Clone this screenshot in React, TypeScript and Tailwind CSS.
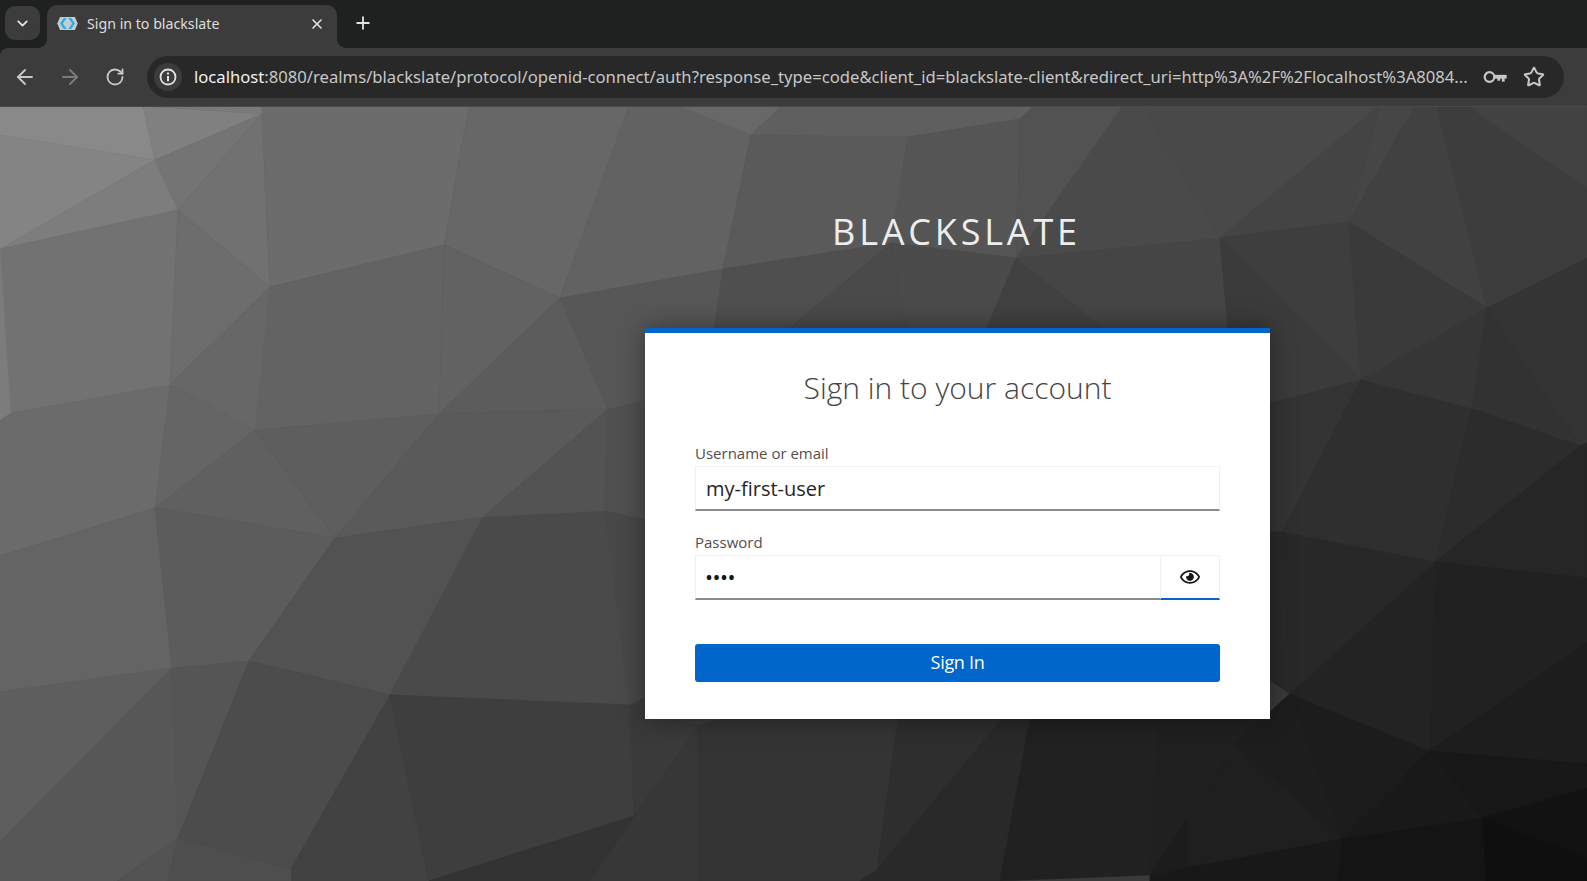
import { ArrowLeft, ArrowRight, ChevronDown, Plus, RotateCw, Star, X } from 'lucide-react'
import { FaRegEye } from 'react-icons/fa'

const url =
  'realms/blackslate/protocol/openid-connect/auth?response_type=code&client_id=blackslate-client&redirect_uri=http%3A%2F%2Flocalhost%3A8084...'

// polygon faces of the login background, in page coordinates
const faces: [string, string][] = [
  ['#898989', '0,106 143,106 155,160 0,135'],
  ['#808080', '143,106 262,114 155,160'],
  ['#7a7a7a', '143,106 262,106 262,114'],
  ['#848484', '0,135 155,160 0,249'],
  ['#7d7d7d', '155,160 178,210 0,249'],
  ['#747474', '155,160 262,114 178,210'],
  ['#717171', '178,210 262,114 270,287'],
  ['#6c6c6c', '262,114 262,106 469,106 444,245 270,287'],
  ['#676767', '469,106 629,106 560,298 444,245'],
  ['#727272', '0,249 178,210 170,385 11,413'],
  ['#7c7c7c', '0,249 11,413 0,421'],
  ['#6d6d6d', '178,210 270,287 170,385'],
  ['#636363', '270,287 444,245 439,414 255,430'],
  ['#676767', '170,385 270,287 255,430'],
  ['#626262', '444,245 560,298 439,414'],
  ['#5c5c5c', '560,298 608,409 439,414'],
  ['#6b6b6b', '11,413 170,385 155,508 0,556 0,421'],
  ['#656565', '170,385 255,430 155,508'],
  ['#606060', '255,430 335,538 155,508'],
  ['#5e5e5e', '255,430 439,414 335,538'],
  ['#5a5a5a', '439,414 608,409 483,517 335,538'],
  ['#646464', '0,556 155,508 172,668 0,692'],
  ['#5c5c5c', '155,508 335,538 249,661 172,668'],
  ['#525252', '335,538 483,517 390,695 249,661'],
  ['#4a4a4a', '483,517 605,511 630,705 390,695'],
  ['#535353', '483,517 608,409 605,511'],
  ['#505050', '608,409 645,395 645,520 605,511'],
  ['#484848', '605,511 645,520 645,715 630,705'],
  ['#5e5e5e', '0,692 172,668 0,842'],
  ['#575757', '0,842 172,668 178,838 117,881 0,881'],
  ['#555555', '172,668 249,661 178,838'],
  ['#4c4c4c', '249,661 390,695 291,869 178,838'],
  ['#424242', '390,695 429,881 291,881 291,869'],
  ['#3e3e3e', '390,695 630,705 634,816 429,881'],
  ['#525252', '178,838 168,881 117,881'],
  ['#4e4e4e', '178,838 291,869 291,881 168,881'],
  ['#3a3a3a', '630,705 698,726 634,816'],
  ['#3c3c3c', '630,705 660,690 720,719 698,726'],
  ['#373737', '634,816 698,726 698,881 590,881'],
  ['#333333', '429,881 634,816 590,881'],
  ['#626262', '629,106 679,106 751,135 723,269 560,298'],
  ['#686868', '679,106 782,106 751,135'],
  ['#5f5f5f', '782,106 1007,106 1020,119 908,137 751,135'],
  ['#5a5a5a', '751,135 908,137 891,243 723,269'],
  ['#575757', '560,298 723,269 714,340 645,400 608,409'],
  ['#555555', '908,137 1020,119 1016,258 891,243'],
  ['#606060', '1020,119 1007,106 1033,106'],
  ['#525252', '1020,119 1033,106 1123,106 1016,258'],
  ['#4f4f4f', '723,269 891,243 790,328 714,328'],
  ['#4a4a4a', '891,243 906,328 790,328'],
  ['#4b4b4b', '891,243 1016,258 987,328 906,328'],
  ['#414141', '1016,258 1103,328 987,328'],
  ['#454545', '1016,258 1220,238 1228,328 1103,328'],
  ['#4a4a4a', '1016,258 1123,106 1143,106 1187,181 1220,238'],
  ['#494949', '1143,106 1379,106 1220,238'],
  ['#464646', '1379,106 1415,106 1349,222'],
  ['#444444', '1220,238 1379,106 1349,222'],
  ['#414141', '1415,106 1437,106 1487,308 1349,222'],
  ['#3d3d3d', '1437,106 1467,106 1587,188 1587,258 1487,308'],
  ['#424242', '1467,106 1587,106 1587,188'],
  ['#3e3e3e', '1220,238 1349,222 1361,380'],
  ['#3b3b3b', '1220,238 1361,380 1270,403 1228,328'],
  ['#3a3a3a', '1349,222 1487,308 1361,380'],
  ['#363636', '1361,380 1487,308 1472,409'],
  ['#343434', '1487,308 1587,258 1587,443 1580,446'],
  ['#323232', '1487,308 1580,446 1472,409'],
  ['#343434', '1270,403 1361,380 1282,532 1270,534'],
  ['#2f2f2f', '1361,380 1472,409 1435,562 1282,532'],
  ['#2c2c2c', '1472,409 1580,446 1435,562'],
  ['#262626', '1580,446 1587,443 1587,578 1435,562'],
  ['#2a2a2a', '1270,532 1282,532 1290,694 1270,680'],
  ['#282828', '1282,532 1435,562 1290,694'],
  ['#212121', '1435,562 1587,578 1587,643 1429,751'],
  ['#232323', '1435,562 1429,751 1290,694'],
  ['#1d1d1d', '1429,751 1587,643 1587,764'],
  ['#171717', '1429,751 1587,764 1587,788 1482,818'],
  ['#1c1c1c', '1290,694 1429,751 1342,839'],
  ['#191919', '1429,751 1482,818 1342,839'],
  ['#121212', '1482,818 1587,788 1587,858'],
  ['#0f0f0f', '1482,818 1587,858 1587,881 1485,881'],
  ['#141414', '1342,839 1482,818 1485,881 1337,881'],
  ['#1f1f1f', '1234,744 1342,839 1187,868 1187,818'],
  ['#1d1d1d', '1234,744 1290,694 1342,839'],
  ['#181818', '1187,868 1342,839 1337,881 1150,881'],
  ['#343434', '698,726 720,719 898,719 877,870 860,881 698,881'],
  ['#2e2e2e', '898,719 1002,719 877,870'],
  ['#292929', '1002,719 1030,719 1000,881 860,881 877,870'],
  ['#212121', '1030,719 1160,719 1150,875 1000,881'],
  ['#202020', '1160,719 1270,719 1234,744 1187,818 1150,875'],
  ['#1e1e1e', '1270,719 1290,694 1234,744'],
  ['#1c1c1c', '1187,818 1187,868 1150,875'],
  ['#191919', '1150,875 1187,868 1150,881'],
]

function Background() {
  return (
    <svg className="absolute inset-0 h-full w-full" viewBox="0 107 1587 774" preserveAspectRatio="none">
      <rect x="0" y="106" width="1587" height="775" fill="#3a3a3a" />
      {faces.map(([fill, points]) => (
        <polygon key={points} points={points} fill={fill} stroke={fill} strokeWidth="0.6" />
      ))}
    </svg>
  )
}

function Favicon() {
  return (
    <svg width="21" height="13" viewBox="0 0 22 14" className="shrink-0">
      <path d="M3 0h16l3 7-3 7H3L0 7z" fill="#c9cacb" />
      <path d="M7 1 3 7l4 6h3L6 7l4-6z" fill="#1fb0ea" />
      <path d="M12 1l4 6-4 6h3l4-6-4-6z" fill="#1fb0ea" />
    </svg>
  )
}

function KeyIcon() {
  return (
    <svg width="24" height="14" viewBox="0 0 24 14" fill="none" stroke="#c7c7c7" className="shrink-0">
      <circle cx="6.500" cy="7" r="4.800" strokeWidth="2.200" />
      <path d="M11 5h12.500v3.500h-2v3h-2.500v-3h-2v2h-2.500v-2H11z" fill="#c7c7c7" strokeWidth="0.300" />
    </svg>
  )
}

function Field({ label, value }: { label: string; value: string }) {
  return (
    <div>
      <div className="h-[26px] text-[15px] leading-[26px] text-[#4f4f4f]">{label}</div>
      <div className="flex h-[45px] items-center border border-b-2 border-[#f0f0f0] border-b-[#8a8d90] px-[10px] pt-[2px] text-[20px] text-[#262626]">
        {value}
      </div>
    </div>
  )
}

export default function App() {
  return (
    <div className="flex h-[881px] w-full flex-col overflow-hidden bg-[#1f2020] font-['Open_Sans',sans-serif]">
      <div className="flex h-[48px] shrink-0 items-start pl-[5px] font-['Noto_Sans',sans-serif]">
        <button className="mt-[6px] flex h-[34px] w-[35px] items-center justify-center rounded-[10px] bg-[#3c3c3c] text-[#e3e3e3]">
          <ChevronDown size={17} strokeWidth={2.6} />
        </button>
        <div className="relative mt-[5px] ml-[7px] flex h-[43px] w-[290px] items-center rounded-t-[10px] bg-[#3c3c3c] pr-[12px] pb-[6px] pl-[10px]">
          <span className="absolute bottom-0 left-[-10px] h-[10px] w-[10px] bg-[radial-gradient(circle_at_0_0,#1f2020_10px,#3c3c3c_10.500px)]" />
          <span className="absolute right-[-10px] bottom-0 h-[10px] w-[10px] bg-[radial-gradient(circle_at_100%_0,#1f2020_10px,#3c3c3c_10.500px)]" />
          <Favicon />
          <span className="ml-[9px] flex-1 text-[14.2px] text-[#dedede]">Sign in to blackslate</span>
          <X size={16} strokeWidth={2.4} className="text-[#e3e3e3]" />
        </div>
        <Plus size={20} strokeWidth={2.2} className="mt-[13px] ml-[16px] text-[#e3e3e3]" />
      </div>

      <div className="flex h-[59px] shrink-0 items-center rounded-tl-[8px] border-b border-[#4a4a4a] bg-[#3c3c3c] pr-[23px] font-['Noto_Sans',sans-serif]">
        <ArrowLeft size={24} strokeWidth={1.9} className="ml-[12.5px] shrink-0 text-[#c7c7c7]" />
        <ArrowRight size={24} strokeWidth={1.9} className="ml-[21px] shrink-0 text-[#7a7a7a]" />
        <RotateCw size={20} strokeWidth={2.2} className="ml-[23px] shrink-0 text-[#c7c7c7]" />
        <div className="ml-[22.5px] flex h-[42px] min-w-0 flex-1 items-center rounded-full bg-[#282828] pr-[19px] pl-[7px]">
          <span className="flex h-[28px] w-[28px] shrink-0 items-center justify-center rounded-full bg-[#3c3c3c]">
            <svg width="18" height="18" viewBox="0 0 18 18" fill="none" stroke="#e3e3e3">
              <circle cx="9" cy="9" r="7.500" strokeWidth="1.800" />
              <path d="M9 8v5.200" strokeWidth="2" />
              <path d="M9 4.600v2" strokeWidth="2" />
            </svg>
          </span>
          <span className="ml-[12px] min-w-0 flex-1 overflow-hidden text-[16.65px] whitespace-nowrap text-[#c7c7c7]">
            <span className="text-[#f1f1f1]">localhost</span>:8080/{url}
          </span>
          <KeyIcon />
          <Star size={22} strokeWidth={2.2} className="ml-[16px] shrink-0 text-[#c7c7c7]" />
        </div>
      </div>

      <main className="relative flex flex-1 justify-end pr-[317px]">
        <Background />
        <div className="relative flex w-[625px] flex-col">
          <h1 className="mt-[101px] mr-[2px] h-[120px] text-center text-[36px] leading-[48px] font-normal tracking-[0.106em] text-[#ededed]">
            BLACKSLATE
          </h1>
          <div className="h-[391px] border-t-[5px] border-[#0066cc] bg-white px-[50px] shadow-[0_0_25px_rgba(0,0,0,0.4)]">
            <h2 className="mt-[31px] mb-[28px] text-center text-[30px] leading-[48px] font-light text-[#444444]">
              Sign in to your account
            </h2>
            <Field label="Username or email" value="my-first-user" />
            <div className="mt-[18px] flex flex-col">
              <div className="h-[26px] text-[15px] leading-[26px] text-[#4f4f4f]">Password</div>
              <div className="flex h-[45px]">
                <div className="flex flex-1 items-center border border-r-0 border-b-2 border-[#f0f0f0] border-b-[#8a8d90] px-[10px] text-[16px] font-bold tracking-[1.5px] text-[#151515]">
                  ••••
                </div>
                <div className="flex w-[60px] items-center justify-center border border-b-2 border-[#f0f0f0] border-b-[#0066cc] text-[#151515]">
                  <FaRegEye size={20} />
                </div>
              </div>
            </div>
            <button className="mt-[44px] h-[38px] w-full rounded-[3px] bg-[#0066cc] pb-[2px] text-[18px] tracking-[-0.3px] text-white">
              Sign In
            </button>
          </div>
        </div>
      </main>
    </div>
  )
}
